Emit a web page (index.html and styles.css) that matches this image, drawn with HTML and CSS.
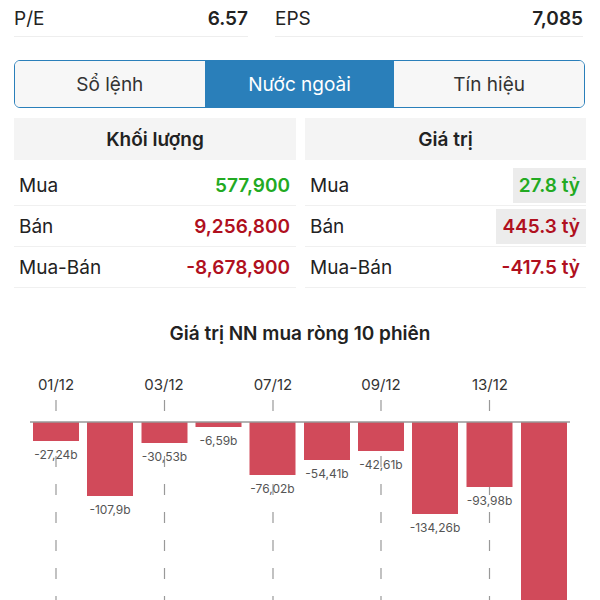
FILE: index.html
```html
<!DOCTYPE html>
<html>
<head>
    <title>Nước ngoài</title>
    <link rel="stylesheet" href="styles.css">
</head>
<body>
    <div class="stats">
        <div class="stat">
            <span>P/E</span>
            <span class="stat-value">6.57</span>
        </div>
        <div class="stat">
            <span>EPS</span>
            <span class="stat-value">7,085</span>
        </div>
    </div>

    <div class="tabs">
        <div class="tab">Sổ lệnh</div>
        <div class="tab active">Nước ngoài</div>
        <div class="tab">Tín hiệu</div>
    </div>

    <div class="tables">
        <div class="panel">
            <div class="panel-header">Khối lượng</div>
            <div class="row">
                <span>Mua</span>
                <span class="value up">577,900</span>
            </div>
            <div class="row">
                <span>Bán</span>
                <span class="value down">9,256,800</span>
            </div>
            <div class="row">
                <span>Mua-Bán</span>
                <span class="value down">-8,678,900</span>
            </div>
        </div>
        <div class="panel">
            <div class="panel-header">Giá trị</div>
            <div class="row">
                <span>Mua</span>
                <span class="value up flash">27.8 tỷ</span>
            </div>
            <div class="row">
                <span>Bán</span>
                <span class="value down flash">445.3 tỷ</span>
            </div>
            <div class="row">
                <span>Mua-Bán</span>
                <span class="value down">-417.5 tỷ</span>
            </div>
        </div>
    </div>

    <h3 class="chart-title">Giá trị NN mua ròng 10 phiên</h3>

    <svg class="chart" width="600" height="240" viewBox="0 360 600 240">
        <g class="dates">
            <text x="56" y="390">01/12</text>
            <text x="164" y="390">03/12</text>
            <text x="273" y="390">07/12</text>
            <text x="381" y="390">09/12</text>
            <text x="490" y="390">13/12</text>
        </g>
        <g class="grid">
            <line x1="56" y1="400" x2="56" y2="600"></line>
            <line x1="164.5" y1="400" x2="164.5" y2="600"></line>
            <line x1="273" y1="400" x2="273" y2="600"></line>
            <line x1="381" y1="400" x2="381" y2="600"></line>
            <line x1="489.5" y1="400" x2="489.5" y2="600"></line>
        </g>
        <g class="bars">
            <rect x="33" y="422" width="46" height="19"></rect>
            <rect x="87" y="422" width="46" height="74"></rect>
            <rect x="141.5" y="422" width="46" height="21"></rect>
            <rect x="195.5" y="422" width="46" height="5"></rect>
            <rect x="249.5" y="422" width="46" height="53"></rect>
            <rect x="304" y="422" width="46" height="38"></rect>
            <rect x="358" y="422" width="46" height="29"></rect>
            <rect x="412" y="422" width="46" height="92"></rect>
            <rect x="466.5" y="422" width="46" height="65"></rect>
            <rect x="521" y="422" width="46" height="291"></rect>
        </g>
        <line class="axis" x1="30" y1="422" x2="570" y2="422"></line>
        <g class="bar-labels">
            <text x="56" y="459">-27,24b</text>
            <text x="110" y="514">-107,9b</text>
            <text x="164.5" y="461">-30,53b</text>
            <text x="218.5" y="445">-6,59b</text>
            <text x="272.5" y="493">-76,02b</text>
            <text x="327" y="478">-54,41b</text>
            <text x="381" y="469">-42,61b</text>
            <text x="435" y="532">-134,26b</text>
            <text x="489.5" y="505">-93,98b</text>
        </g>
    </svg>
</body>
</html>
```

FILE: styles.css
```css
body {
    font-family: Inter, "Noto Sans", sans-serif;
    color: #222;
    background: white;
    margin: 0;
    font-size: 19px;
}
.stats {
    display: grid;
    grid-template-columns: 234px 1fr;
    column-gap: 27px;
    margin: 0 17px 0 14px;
}
.stat {
    display: flex;
    justify-content: space-between;
    align-items: center;
    height: 36px;
    border-bottom: 1px solid #eee;
}
.stat-value {
    font-weight: 600;
}
.tabs {
    display: grid;
    grid-template-columns: 1fr 1fr 1fr;
    margin: 23px 15px 0 14px;
    height: 48px;
    border: 1.5px solid #2a7fba;
    border-radius: 6px;
    overflow: hidden;
    box-sizing: border-box;
}
.tab {
    display: flex;
    align-items: center;
    justify-content: center;
    background: #f7f7f7;
    color: #333;
}
.tab.active {
    background: #2a7fba;
    color: white;
}
.tables {
    display: grid;
    grid-template-columns: 282px 281px;
    column-gap: 9px;
    margin: 10px 0 0 14px;
}
.panel-header {
    display: flex;
    align-items: center;
    justify-content: center;
    height: 42px;
    margin-bottom: 5px;
    background: #f4f4f4;
    font-weight: 600;
}
.row {
    display: flex;
    justify-content: space-between;
    align-items: center;
    height: 40px;
    padding-left: 5px;
    border-bottom: 1px solid #f0f0f0;
}
.value {
    font-weight: 600;
    padding: 0 6px;
    line-height: 35px;
}
.value.up {
    color: #22aa22;
}
.value.down {
    color: #b0101e;
}
.value.flash {
    background: #ececec;
}
.chart-title {
    margin: 34px 0 0;
    text-align: center;
    font-size: 19px;
    font-weight: 600;
    line-height: 24px;
}
.chart {
    display: block;
    margin-top: 14px;
}
.dates text {
    font-size: 15px;
    fill: #333;
    text-anchor: middle;
}
.grid line {
    stroke: #999;
    stroke-width: 1.2;
    stroke-dasharray: 11 17;
}
.bars rect {
    fill: #d14a5a;
}
.axis {
    stroke: #999;
    stroke-width: 1.5;
}
.bar-labels text {
    font-size: 12px;
    fill: #555;
    text-anchor: middle;
}
```
